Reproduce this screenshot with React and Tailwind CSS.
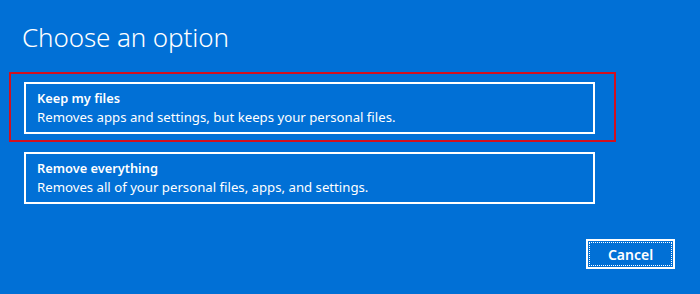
export default function App() {
  return (
    <div className="w-[700px] h-[294px] bg-[#0170d6] text-white flex flex-col font-['Noto_Sans',sans-serif]">
      {/* Title */}
      <h1 className="ml-[22px] mt-[19px] text-[26px] leading-[36px] font-light tracking-[-0.1px]">
        Choose an option
      </h1>

      {/* Selected option with red highlight */}
      <div className="ml-[9px] mt-[17px] w-[607px] h-[70px] border-2 border-[#d2101e] pl-[13px] pt-[8px]">
        <button className="w-[571px] h-[52px] border-2 border-white text-left pl-[11px] flex flex-col justify-center">
          <span className="text-[12.8px] leading-[19px] font-semibold">Keep my files</span>
          <span className="text-[13.2px] leading-[19px]">
            Removes apps and settings, but keeps your personal files.
          </span>
        </button>
      </div>

      <button className="ml-[24px] mt-[10px] w-[571px] h-[52px] border-2 border-white text-left pl-[11px] flex flex-col justify-center">
        <span className="text-[12.8px] leading-[19px] font-semibold">Remove everything</span>
        <span className="text-[13.2px] leading-[19px]">
          Removes all of your personal files, apps, and settings.
        </span>
      </button>

      {/* Footer */}
      <div className="flex justify-end pr-[25px] mt-[35px]">
        <button className="w-[89px] h-[30px] border-2 border-white p-[1px]">
          <span className="flex w-full h-full items-center justify-center border border-dotted border-white text-[14px] font-semibold">
            Cancel
          </span>
        </button>
      </div>
    </div>
  );
}
